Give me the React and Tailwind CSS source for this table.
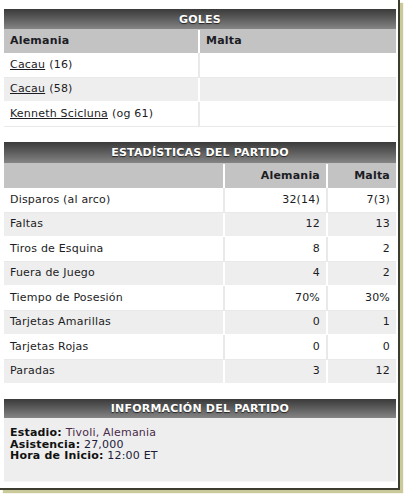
import React from 'react';

const font = { fontFamily: '"DejaVu Sans", Verdana, sans-serif' };

const Header = ({ title, h = 'h-[20px]' }) => (
  <div className={`${h} flex items-center justify-center pt-[2px] bg-gradient-to-b from-[#3a3a3a] to-[#858585] text-white font-bold text-[11px] [text-shadow:0_1px_1px_#222]`}>
    {title}
  </div>
);

const goals = [
  { name: 'Cacau', note: '(16)' },
  { name: 'Cacau', note: '(58)' },
  { name: 'Kenneth Scicluna', note: '(og 61)' }
];

const stats = [
  ['Disparos (al arco)', '32(14)', '7(3)'],
  ['Faltas', '12', '13'],
  ['Tiros de Esquina', '8', '2'],
  ['Fuera de Juego', '4', '2'],
  ['Tiempo de Posesión', '70%', '30%'],
  ['Tarjetas Amarillas', '0', '1'],
  ['Tarjetas Rojas', '0', '0'],
  ['Paradas', '3', '12']
];

export default function App() {
  return (
    <div className="w-[404px] h-[494px] bg-white text-[11px] tracking-[0.2px] text-[#1c1c24]" style={font}>
      <div className="w-[400px] h-[490px] border-r-2 border-b-2 border-[#3c3c30] shadow-[3px_3px_1px_#c9c99a] pt-[9px] pl-[4px]">
        <div className="w-[392px]">
          <Header title="GOLES" />
          <div className="grid grid-cols-[196px_196px] h-[24px] pt-[1px] bg-[#c3c3c3] font-bold">
            <div className="flex items-center pl-[6px] border-r-2 border-white">Alemania</div>
            <div className="flex items-center pl-[6px]">Malta</div>
          </div>
          {goals.map((g, i) => (
            <div
              key={i}
              className={`grid grid-cols-[196px_196px] ${i === 1 ? 'h-[24px] bg-[#eeeeee] border-b border-white' : 'h-[25px] bg-white border-b border-[#e9e9e9]'}`}
            >
              <div className={`flex items-center pl-[6px] border-r-2 ${i === 1 ? 'border-white' : 'border-[#e9e9e9]'}`}>
                <span className="underline">{g.name}</span>
                <span className="ml-[4px]">{g.note}</span>
              </div>
              <div />
            </div>
          ))}
        </div>

        <div className="w-[392px] mt-[15px]">
          <Header title="ESTADÍSTICAS DEL PARTIDO" h="h-[21px]" />
          <div className="grid grid-cols-[221px_103px_68px] h-[25px] pt-[1px] bg-[#c3c3c3] font-bold">
            <div className="border-r-2 border-white" />
            <div className="flex items-center justify-end pr-[6px] border-r-2 border-white">Alemania</div>
            <div className="flex items-center justify-end pr-[6px]">Malta</div>
          </div>
          {stats.map((s, i) => {
            const gray = i % 2 === 1;
            const line = gray ? 'border-white' : 'border-[#e9e9e9]';
            return (
              <div
                key={s[0]}
                className={`grid grid-cols-[221px_103px_68px] h-[24.5px] border-b ${line} ${gray ? 'bg-[#eeeeee]' : 'bg-white'}`}
              >
                <div className={`flex items-center pl-[6px] border-r-2 ${line}`}>{s[0]}</div>
                <div className={`flex items-center justify-end pr-[6px] border-r-2 ${line}`}>{s[1]}</div>
                <div className="flex items-center justify-end pr-[6px]">{s[2]}</div>
              </div>
            );
          })}
        </div>

        <div className="w-[392px] mt-[15px]">
          <Header title="INFORMACIÓN DEL PARTIDO" h="h-[19px]" />
          <div className="h-[64px] bg-[#eeeeee] border-b border-[#f6f6f6] px-[6px] pt-[9px] leading-[11.5px]">
            <div><span className="font-bold text-[#111]">Estadio:</span> <span className="text-[#4a2a4a]">Tivoli, Alemania</span></div>
            <div><span className="font-bold text-[#111]">Asistencia:</span> <span className="text-[#1c1c3a]">27,000</span></div>
            <div><span className="font-bold text-[#111]">Hora de Inicio:</span> <span className="text-[#1c1c3a]">12:00 ET</span></div>
          </div>
        </div>
      </div>
    </div>
  );
}
